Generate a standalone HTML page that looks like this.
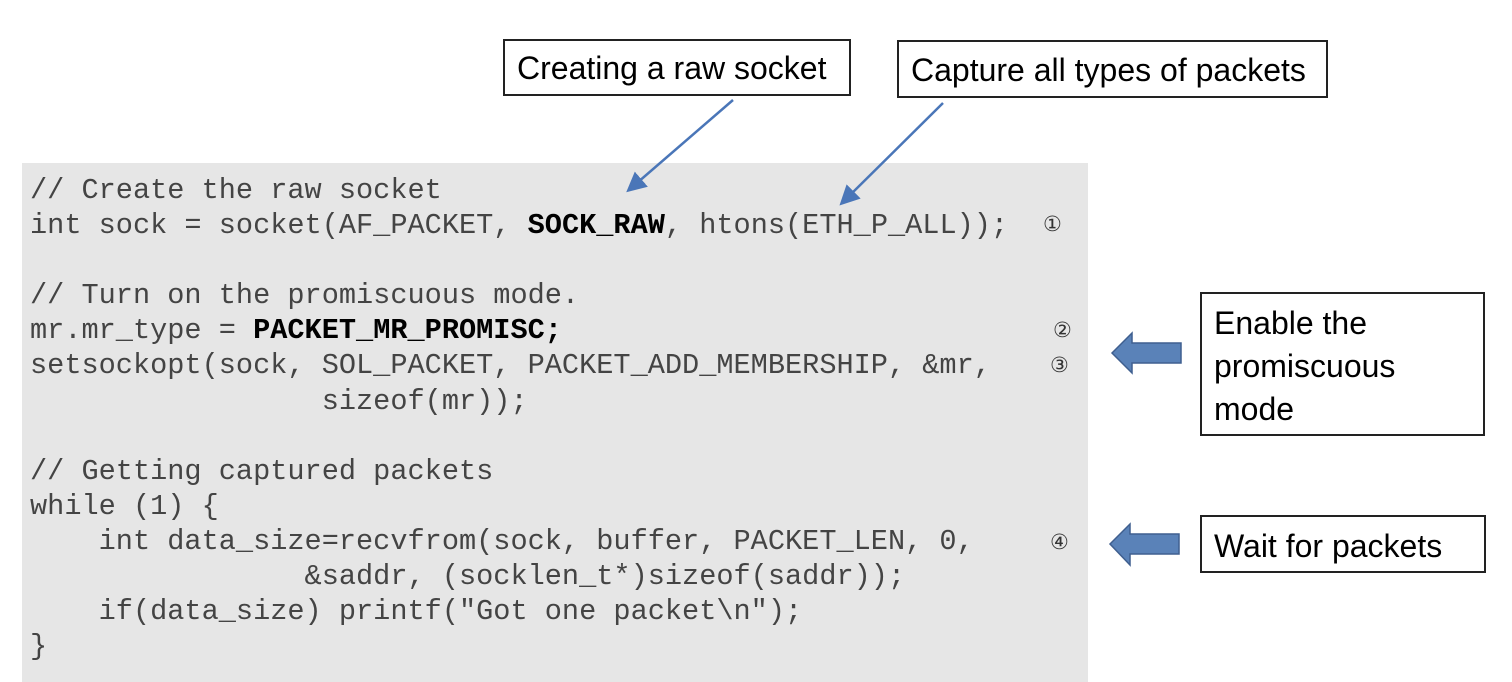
<!DOCTYPE html>
<html><head><style>
body{margin:0;width:1512px;height:682px;background:#fff;position:relative;overflow:hidden;font-family:"Liberation Sans",sans-serif}
.code{position:absolute;left:22px;top:163px;width:1066px;height:519px;background:#e6e6e6}
pre{position:absolute;left:30px;top:173px;margin:0;font-family:"Liberation Mono",monospace;font-size:28.6px;line-height:35.1px;color:#444}
pre b{color:#000}
.box{position:absolute;border:2px solid #222;background:#fff;font-size:32px;color:#000;box-sizing:border-box;padding-left:12px;white-space:nowrap}
.n{position:absolute;font-size:21px;color:#333;font-family:"DejaVu Sans",sans-serif}
</style></head><body>
<div class="code"></div>
<pre>// Create the raw socket
int sock = socket(AF_PACKET, <b>SOCK_RAW</b>, htons(ETH_P_ALL));

// Turn on the promiscuous mode.
mr.mr_type = <b>PACKET_MR_PROMISC;</b>
setsockopt(sock, SOL_PACKET, PACKET_ADD_MEMBERSHIP, &amp;mr,
                 sizeof(mr));

// Getting captured packets
while (1) {
    int data_size=recvfrom(sock, buffer, PACKET_LEN, 0,
                &amp;saddr, (socklen_t*)sizeof(saddr));
    if(data_size) printf("Got one packet\n");
}</pre>
<div class="n" style="left:1043px;top:212px">①</div>
<div class="n" style="left:1053px;top:318px">②</div>
<div class="n" style="left:1050px;top:353px">③</div>
<div class="n" style="left:1050px;top:530px">④</div>
<div class="box" style="left:503px;top:39px;width:348px;height:57px;line-height:54px">Creating a raw socket</div>
<div class="box" style="left:897px;top:40px;width:431px;height:58px;line-height:56px">Capture all types of packets</div>
<div class="box" style="left:1200px;top:292px;width:285px;height:144px;line-height:43px;padding-top:8px">Enable the<br>promiscuous<br>mode</div>
<div class="box" style="left:1200px;top:515px;width:286px;height:58px;line-height:58px">Wait for packets</div>
<svg style="position:absolute;left:0;top:0" width="1512" height="682">
<defs><marker id="a" markerWidth="8" markerHeight="8" refX="6" refY="4" orient="auto"><path d="M0,0 L8,4 L0,8 z" fill="#4a76b8"/></marker></defs>
<line x1="733" y1="100" x2="630" y2="189" stroke="#4a76b8" stroke-width="2.5" marker-end="url(#a)"/>
<line x1="943" y1="103" x2="843" y2="202" stroke="#4a76b8" stroke-width="2.5" marker-end="url(#a)"/>
<path d="M1112,353 L1132,333 L1132,343 L1181,343 L1181,363 L1132,363 L1132,373 Z" fill="#5a82b8" stroke="#3f5f8f" stroke-width="1.5"/>
<path d="M1110,544 L1130,524 L1130,534 L1179,534 L1179,554 L1130,554 L1130,565 Z" fill="#5a82b8" stroke="#3f5f8f" stroke-width="1.5"/>
</svg>
</body></html>
